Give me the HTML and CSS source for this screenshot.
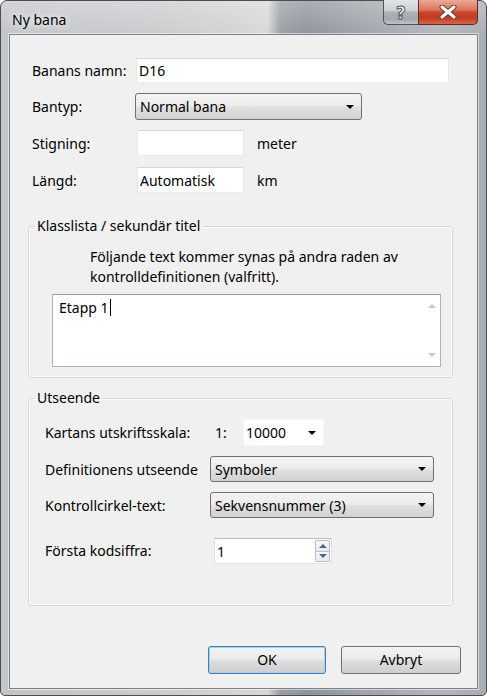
FILE: index.html
```html
<!DOCTYPE html>
<html lang="sv">
<head>
<meta charset="utf-8">
<title>Ny bana</title>
<link rel="stylesheet" href="styles.css">
</head>
<body>
<div class="window">
  <div class="titlebar">
    <span class="title">Ny bana</span>
    <div class="caption-buttons">
      <div class="cap-btn help"><span class="q">?</span></div>
      <div class="cap-btn close">
        <svg width="20" height="14" viewBox="0 0 20 14">
          <path d="M4 2 L16 12 M16 2 L4 12" stroke="#6b3a30" stroke-width="5" stroke-linecap="round" fill="none"/>
          <path d="M4 2 L16 12 M16 2 L4 12" stroke="#ffffff" stroke-width="3" stroke-linecap="round" fill="none"/>
        </svg>
      </div>
    </div>
  </div>
  <div class="client">
    <div class="top-form">
      <div class="row r1"><span class="lbl">Banans namn:</span><div class="textbox name">D16</div></div>
      <div class="row r2"><span class="lbl">Bantyp:</span><div class="combo bantyp"><span class="ctext">Normal bana</span><span class="arrow"></span></div></div>
      <div class="row r3"><span class="lbl">Stigning:</span><div class="textbox small"></div><span class="unit">meter</span></div>
      <div class="row r4"><span class="lbl">Längd:</span><div class="textbox small">Automatisk</div><span class="unit">km</span></div>
    </div>

    <fieldset class="group g1">
      <legend>Klasslista / sekundär titel</legend>
      <p class="desc">Följande text kommer synas på andra raden av<br>kontrolldefinitionen (valfritt).</p>
      <div class="memo">
        <div class="memo-text">Etapp 1<span class="caret"></span></div>
        <div class="memo-scroll"><span class="sarrow up"></span><span class="sarrow down"></span></div>
      </div>
    </fieldset>

    <fieldset class="group g2">
      <legend>Utseende</legend>
      <div class="grid">
        <span class="lbl2">Kartans utskriftsskala:</span>
        <div class="scale"><span class="one">1:</span><div class="combo flat"><span class="ctext">10000</span><span class="arrow"></span></div></div>
        <span class="lbl2">Definitionens utseende</span>
        <div class="combo wide"><span class="ctext">Symboler</span><span class="arrow"></span></div>
        <span class="lbl2">Kontrollcirkel-text:</span>
        <div class="combo wide"><span class="ctext">Sekvensnummer (3)</span><span class="arrow"></span></div>
        <span class="lbl2 last">Första kodsiffra:</span>
        <div class="spin last"><span class="spin-text">1</span><div class="spin-btns"><span class="sb up"><i></i></span><span class="sb down"><i></i></span></div></div>
      </div>
    </fieldset>

    <div class="buttons">
      <div class="btn default">OK</div>
      <div class="btn">Avbryt</div>
    </div>
  </div>
</div>
</body>
</html>
```

FILE: styles.css
```css
* { box-sizing: border-box; }
html, body { margin: 0; padding: 0; }
body {
  width: 487px;
  height: 696px;
  overflow: hidden;
  background: #ffffff;
  font-family: "Noto Sans", "Open Sans", sans-serif;
  font-size: 14px;
  color: #000;
}

.window {
  width: 487px;
  height: 696px;
  border: 1px solid #4a4e53;
  border-radius: 7px 7px 5px 5px;
  background:
    linear-gradient(180deg, rgba(255,255,255,0.25) 0px, rgba(255,255,255,0) 34px),
    linear-gradient(90deg, #c3c6c9 0%, #c9cbcd 30%, #d3d3d3 47%, #d8d8d8 55%, #9ba0a6 57.5%, #8e949b 63%, #9fa5ab 75%, #b2b7bc 90%, #a9aeb3 100%);
  padding: 0 8px 6px 8px;
  display: flex;
  flex-direction: column;
}

.titlebar {
  height: 33px;
  flex: none;
  display: flex;
  justify-content: space-between;
  align-items: flex-start;
}
.title {
  margin: 10px 0 0 3px;
  line-height: 18px;
  font-size: 14px;
  text-shadow: 0 0 6px rgba(255,255,255,0.9), 0 0 10px rgba(255,255,255,0.7);
}
.caption-buttons {
  display: flex;
  margin-right: 0;
  margin-top: -1px;
}
.cap-btn {
  height: 25px;
  display: flex;
  align-items: center;
  justify-content: center;
  border: 1px solid #4f5256;
  border-top: none;
}
.help {
  width: 35px;
  border-radius: 0 0 0 5px;
  border-right: none;
  background: linear-gradient(180deg, #e3e5e8 0%, #ccd0d4 45%, #aeb2b7 50%, #a3a8ad 80%, #bfc3c7 100%);
}
.q {
  font-family: "DejaVu Sans", sans-serif;
  font-weight: bold;
  font-size: 17px;
  line-height: 20px;
  color: #f2f2f2;
  -webkit-text-stroke: 1px #55595e;
  margin-top: 1px;
}
.close {
  width: 60px;
  border-radius: 0 0 5px 0;
  border-color: #5a2d25;
  background: linear-gradient(180deg, #eaa898 0%, #dc7864 40%, #c9452c 52%, #c23b22 75%, #d7674b 100%);
}
.close svg { display: block; }

.client {
  flex: 1;
  background: #f0f0f0;
  border: 1px solid #7d8186;
  box-shadow: 0 0 0 1px rgba(255,255,255,0.55);
  display: flex;
  flex-direction: column;
}

/* top rows */
.top-form {
  padding: 23px 0 0 22px;
  display: flex;
  flex-direction: column;
}
.row {
  display: flex;
  align-items: center;
}
.r1 { height: 25px; margin-bottom: 10px; }
.r2 { height: 27px; margin-bottom: 10px; }
.r3 { height: 26px; margin-bottom: 11px; }
.r4 { height: 26px; }
.lbl { width: 104px; flex: none; }
.r2 .lbl { width: 103px; }
.r3 .lbl, .r4 .lbl { width: 105px; }

.textbox {
  height: 100%;
  background: #fff;
  border: 1px solid;
  border-color: #d4d6db #e6e7ec #e9edf1 #e6e7ec;
  padding-left: 2px;
  display: flex;
  align-items: center;
}
.textbox.name { width: 313px; }
.textbox.small { width: 107px; }
.unit { margin-left: 13px; }

.combo {
  height: 100%;
  border: 1px solid #707070;
  border-radius: 3px;
  background: linear-gradient(180deg, #f3f3f3 0%, #ececec 45%, #dfdfdf 55%, #d2d2d2 100%);
  display: flex;
  align-items: center;
  padding-left: 4px;
}
.combo.bantyp { width: 227px; }
.arrow {
  margin-left: auto;
  margin-right: 7px;
  width: 0;
  height: 0;
  border-left: 4px solid transparent;
  border-right: 4px solid transparent;
  border-top: 4px solid #000;
}

/* group boxes */
.group {
  margin: 0 24px 0 18px;
  padding: 0;
  min-width: 0;
  border: 1px solid #d5d9dd;
  border-radius: 3px;
  box-shadow: inset 0 0 0 1px #fbfbfb;
}
.group legend {
  margin-left: 6px;
  padding: 0 2px;
  line-height: 20px;
}
.g1 { margin-top: 23px; padding-bottom: 10px; }
.g2 { margin-top: 10px; padding-bottom: 41px; }

.desc {
  margin: 11px 0 0 61px;
  line-height: 20px;
}
.memo {
  margin: 7px 11px 0 23px;
  height: 73px;
  background: #fff;
  border: 1px solid #a9b3be;
  border-top-color: #8f9aa6;
  display: flex;
}
.memo-text {
  flex: 1;
  padding: 3px 0 0 6px;
  line-height: 20px;
}
.caret {
  display: inline-block;
  width: 1px;
  height: 17px;
  background: #000;
  vertical-align: -3px;
  margin-left: 1px;
}
.memo-scroll {
  width: 17px;
  display: flex;
  flex-direction: column;
  justify-content: space-between;
  align-items: center;
  padding: 9px 0 9px;
}
.sarrow {
  width: 0;
  height: 0;
  border-left: 4px solid transparent;
  border-right: 4px solid transparent;
}
.sarrow.up { border-bottom: 4px solid #c3c6ca; }
.sarrow.down { border-top: 4px solid #c3c6ca; }

.grid {
  margin: 11px 0 0 16px;
  display: grid;
  grid-template-columns: 165px auto;
  grid-template-rows: 27px 26px 26px 36px;
  row-gap: 10px;
  align-items: center;
}
.grid > * { justify-self: start; }
.grid > .last { align-self: end; }
.grid > .lbl2.last { align-self: end; line-height: 26px; }
.scale {
  height: 27px;
  display: flex;
  align-items: center;
}
.one { margin-left: 5px; width: 28px; }
.combo.flat {
  width: 81px;
  border: 1px solid #f6f6f6;
  border-radius: 0;
  background: #fff;
  padding-left: 2px;
}
.combo.flat .arrow { margin-right: 7px; }
.combo.wide { width: 224px; height: 26px; }

.spin {
  margin-left: 4px;
  width: 118px;
  height: 26px;
  background: #fff;
  border: 1px solid;
  border-color: #b9bcc2 #dfe1e6 #e3e7ec #dfe1e6;
  display: flex;
  align-items: center;
}
.spin-text { flex: 1; padding-left: 2px; }
.spin-btns {
  width: 15px;
  height: 22px;
  margin-right: 1px;
  display: flex;
  flex-direction: column;
}
.sb {
  flex: 1;
  border: 1px solid #b7bfca;
  background: linear-gradient(180deg, #f6f7f9 0%, #e6eaef 100%);
  display: flex;
  align-items: center;
  justify-content: center;
}
.sb.up { border-radius: 2px 2px 0 0; }
.sb.down { border-top: none; border-radius: 0 0 2px 2px; }
.sb i {
  display: block;
  width: 0;
  height: 0;
  border-left: 4px solid transparent;
  border-right: 4px solid transparent;
}
.sb.up i { border-bottom: 4px solid #4d6488; }
.sb.down i { border-top: 4px solid #4d6488; }

/* buttons */
.buttons {
  margin-top: 40px;
  padding-right: 16px;
  display: flex;
  justify-content: flex-end;
  gap: 15px;
}
.btn {
  width: 120px;
  height: 28px;
  border: 1px solid #707070;
  border-radius: 3px;
  background: linear-gradient(180deg, #f3f3f3 0%, #ebebeb 45%, #dddddd 55%, #cfcfcf 100%);
  display: flex;
  align-items: center;
  justify-content: center;
  line-height: 20px;
}
.btn.default {
  width: 118px;
  border-color: #3c7fb1;
  box-shadow: inset 0 0 0 1px #9fd6f1;
}
```
